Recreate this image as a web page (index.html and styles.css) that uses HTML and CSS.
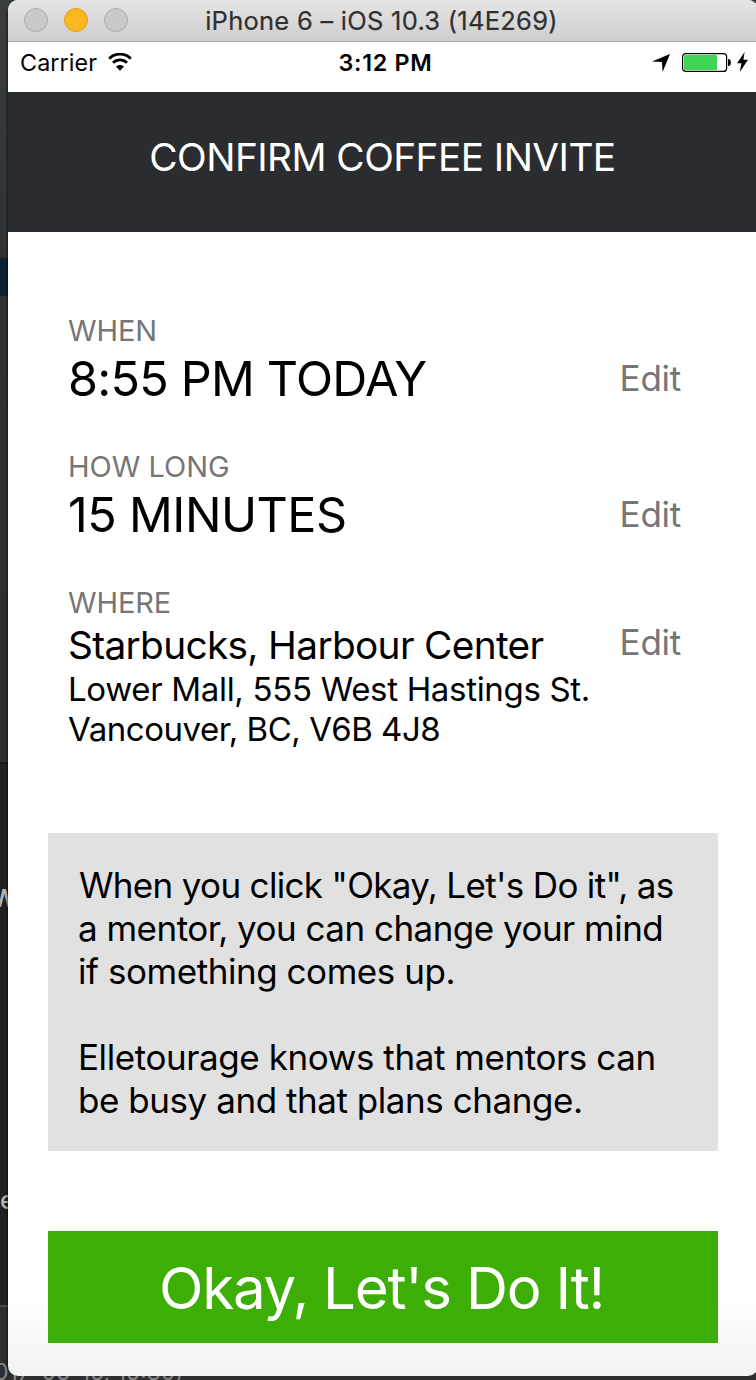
FILE: index.html
```html
<!DOCTYPE html>
<html lang="en">
<head>
<meta charset="utf-8">
<title>Confirm Coffee Invite</title>
<link rel="stylesheet" href="styles.css">
</head>
<body>
<div class="backdrop">
  <div class="pane pane-top"></div>
  <div class="pane pane-selected"></div>
  <div class="pane pane-mid"></div>
  <div class="pane pane-console">
    <span class="scrap scrap-w">W</span>
    <span class="scrap scrap-e">e</span>
  </div>
  <div class="pane pane-bottom"></div>
  <span class="scrap scrap-date">017-06-15, 15:30)</span>
</div>
<div class="window">
  <div class="titlebar">
    <div class="lights">
      <i class="light"></i><i class="light light-min"></i><i class="light"></i>
    </div>
    <div class="window-title">iPhone 6 – iOS 10.3 (14E269)</div>
  </div>
  <div class="statusbar">
    <div class="carrier">
      <span>Carrier</span>
      <svg class="wifi" width="24" height="18" viewBox="0 0 24 18">
        <path d="M1.2 5.6C7.3-.4 16.7-.4 22.8 5.6" fill="none" stroke="#000" stroke-width="2.9"/>
        <path d="M5 9.7C9.1 5.8 14.9 5.8 19 9.7" fill="none" stroke="#000" stroke-width="2.8"/>
        <path d="M7.9 13.6C10.3 11.4 13.7 11.4 16.1 13.6L12 17.8Z"/>
      </svg>
    </div>
    <div class="time">3:12 PM</div>
    <div class="indicators">
      <svg class="arrow" width="18" height="18" viewBox="0 0 18 18"><path d="M18 0L10.6 18L9.9 8.1L0 7.5Z"/></svg>
      <svg class="battery" width="49" height="19" viewBox="0 0 49 19">
        <rect x=".6" y=".6" width="44" height="17.8" rx="3" fill="#fff" stroke="#000" stroke-width="1.2"/>
        <rect x="2" y="2" width="33" height="15" rx="1" fill="#3fd456"/>
        <path d="M46 6H47Q49 7 49 9.5Q49 12 47 13H46Z"/>
      </svg>
      <svg class="bolt" width="11" height="20" viewBox="0 0 11 20"><path d="M7.6 0L0 11.3H4.4L2.8 20L11 7.7H6.4Z"/></svg>
    </div>
  </div>
  <header class="header">CONFIRM COFFEE INVITE</header>
  <main class="content">
    <section class="item">
      <div>
        <div class="label label-when">WHEN</div>
        <div class="value">8:55 PM TODAY</div>
      </div>
      <a class="edit">Edit</a>
    </section>
    <section class="item">
      <div>
        <div class="label">HOW LONG</div>
        <div class="value value-length">15 MINUTES</div>
      </div>
      <a class="edit">Edit</a>
    </section>
    <section class="item">
      <div>
        <div class="label label-where">WHERE</div>
        <div class="place">Starbucks, Harbour Center</div>
        <div class="address">Lower Mall, 555 West Hastings St.</div>
        <div class="address address-city">Vancouver, BC, V6B 4J8</div>
      </div>
      <a class="edit edit-place">Edit</a>
    </section>
    <div class="note">
      <div class="line line-1">When you click "Okay, Let's Do it", as</div>
      <div class="line line-2">a mentor, you can change your mind</div>
      <div class="line">if something comes up.</div>
      <div class="line line-start">Elletourage knows that mentors can</div>
      <div class="line">be busy and that plans change.</div>
    </div>
    <button class="confirm">Okay, Let's Do It!</button>
  </main>
</div>
</body>
</html>
```
FILE: styles.css
```css
* { box-sizing: border-box; }
body {
  margin: 0;
  height: 1380px;
  position: relative;
  overflow: hidden;
  background: #212121;
  font-family: Inter, "Liberation Sans", sans-serif;
  color: #000;
}

/* Editor behind the simulator window */
.backdrop { position: absolute; inset: 0; }
.pane { position: relative; overflow: hidden; }
.pane-top { height: 258px; background: linear-gradient(#3a3e3f, #303233); }
.pane-selected { height: 38px; background: #0c2132; }
.pane-mid { height: 466px; background: linear-gradient(#303233, #2d2f31); }
.pane-console { height: 543px; background: #212121; border-top: 2px solid #191919; }
.pane-bottom { height: 75px; background: #2d2e30; border-top: 2px solid #484a4c; }
.scrap { position: absolute; white-space: nowrap; color: #b4b6b8; line-height: 30px; }
.scrap-w { left: -8px; top: 120px; font-size: 24px; font-weight: 600; }
.scrap-e { left: 0; top: 421px; font-size: 25px; font-weight: 500; }
.scrap-date { left: -6px; top: 1357px; font-size: 23px; color: #85878a; }
.backdrop::after {
  content: "";
  position: absolute;
  left: 8px;
  top: 10px;
  width: 750px;
  height: 1360px;
  box-shadow: 0 0 3px #000;
}

.window {
  position: relative;
  width: 750px;
  height: 1376px;
  margin-left: 8px;
  border-radius: 10px;
  overflow: hidden;
  background: linear-gradient(#fff 1300px, #f3f3f3 1376px);
}

.titlebar {
  height: 42px;
  display: grid;
  align-items: center;
  background: linear-gradient(#e5e5e5, #cecece);
  border-bottom: 1px solid #a9a9a9;
}
.titlebar > * { grid-area: 1 / 1; }
.lights { display: flex; gap: 16px; padding-left: 16px; margin-top: -1px; }
.light {
  width: 24px;
  height: 24px;
  border-radius: 50%;
  background: #c9c9c9;
  border: 1px solid #aaa;
}
.light-min { background: #ffb720; border-color: #e29b14; }
.window-title {
  text-align: center;
  padding-right: 3px;
  font-size: 25.5px;
  line-height: 40px;
  letter-spacing: .26px;
  color: #303030;
  -webkit-text-stroke: .2px #303030;
}

.statusbar {
  height: 50px;
  display: grid;
  grid-template-columns: 1fr auto 1fr;
  padding: 0 10px 0 12px;
  background: #fff;
  font-size: 23.3px;
  line-height: 41px;
}
.carrier { display: flex; letter-spacing: .12px; }
.wifi { margin: 11px 0 0 11px; }
.time { font-weight: 600; letter-spacing: .72px; padding-left: 3px; }
.indicators { display: flex; justify-content: flex-end; }
.arrow { margin: 12px 12px 0 0; }
.battery { margin: 11px 6px 0 0; }
.bolt { margin-top: 10px; }

.header {
  height: 140px;
  padding-right: 1px;
  background: #2b2c30;
  color: #fff;
  text-align: center;
  font-size: 38.8px;
  line-height: 130px;
  letter-spacing: -.56px;
}

.content { padding: 81px 40px 0; }
.item {
  display: flex;
  justify-content: space-between;
  padding: 0 37px 0 20px;
  margin-bottom: 40px;
}
.label {
  font-size: 29px;
  line-height: 36px;
  color: #767676;
}
.label-when { letter-spacing: -.1px; }
.label-where { letter-spacing: -.1px; }
.value {
  font-size: 48.5px;
  line-height: 60px;
  letter-spacing: -.7px;
  word-spacing: -.3px;
}
.value-length { letter-spacing: -.5px; }
.place {
  margin-top: -1px;
  font-size: 38.8px;
  line-height: 49px;
  letter-spacing: -.67px;
}
.address {
  font-size: 33px;
  line-height: 40px;
  letter-spacing: -.32px;
  white-space: nowrap;
}
.address-city { letter-spacing: -.46px; }
.edit {
  margin-top: 44px;
  height: 43px;
  font-size: 35px;
  line-height: 43px;
  letter-spacing: -.25px;
  color: #767676;
}
.edit-place { margin-top: 36px; }

.note {
  height: 318px;
  margin-top: 84px;
  padding: 31px 0 0 30px;
  background: #e1e1e1;
  font-size: 35px;
  line-height: 43px;
  white-space: nowrap;
}
.line { letter-spacing: -.45px; }
.line-1 { padding-left: 1px; letter-spacing: -.67px; }
.line-2 { letter-spacing: -.52px; }
.line-start { margin-top: 43px; letter-spacing: -.42px; }

.confirm {
  display: block;
  width: 100%;
  height: 112px;
  margin-top: 80px;
  padding: 2px 3px 0 0;
  border: 0;
  background: #3dae05;
  color: #fff;
  font: 58.2px/110px Inter, "Liberation Sans", sans-serif;
  letter-spacing: -1.25px;
}
```
